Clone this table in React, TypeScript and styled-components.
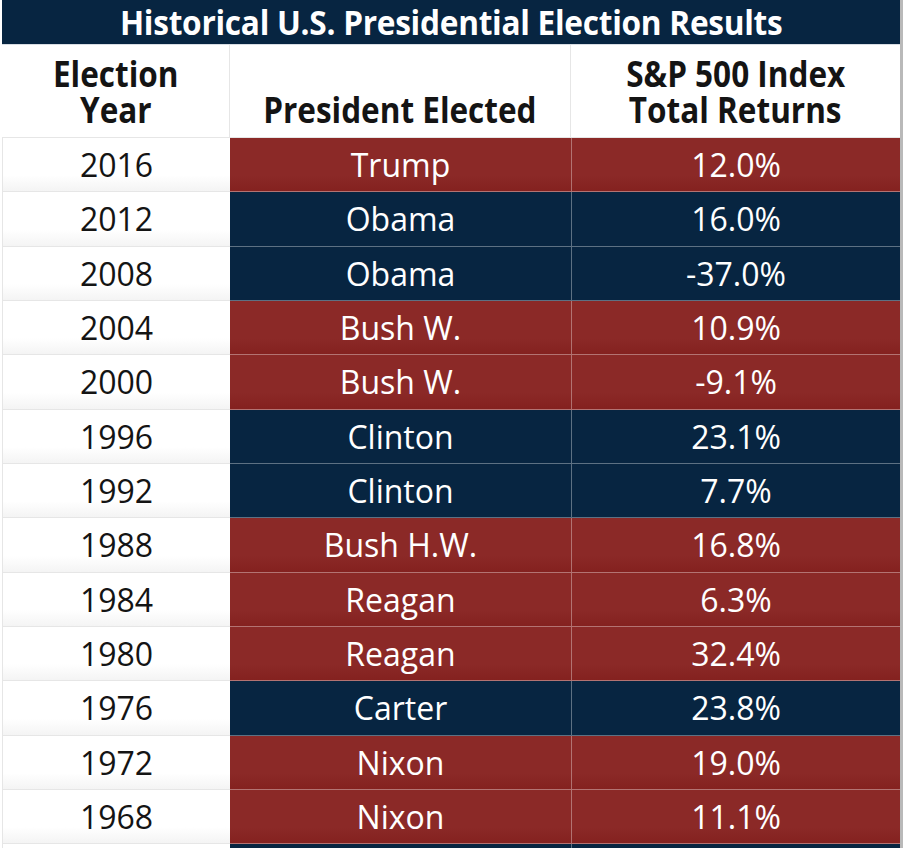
import styled, { createGlobalStyle } from "styled-components";

const GlobalStyle = createGlobalStyle`
  html, body {
    margin: 0;
    padding: 0;
    background: #ffffff;
    overflow: hidden;
  }
`;

const colors = {
  navy: "#072541",
  red: "#8b2927",
  ink: "#141414",
  rule: "#e6e6e6",
};

type Party = "R" | "D";

interface Row {
  year: string;
  president: string;
  party: Party;
  returns: string;
}

const rows: Row[] = [
  { year: "2016", president: "Trump", party: "R", returns: "12.0%" },
  { year: "2012", president: "Obama", party: "D", returns: "16.0%" },
  { year: "2008", president: "Obama", party: "D", returns: "-37.0%" },
  { year: "2004", president: "Bush W.", party: "R", returns: "10.9%" },
  { year: "2000", president: "Bush W.", party: "R", returns: "-9.1%" },
  { year: "1996", president: "Clinton", party: "D", returns: "23.1%" },
  { year: "1992", president: "Clinton", party: "D", returns: "7.7%" },
  { year: "1988", president: "Bush H.W.", party: "R", returns: "16.8%" },
  { year: "1984", president: "Reagan", party: "R", returns: "6.3%" },
  { year: "1980", president: "Reagan", party: "R", returns: "32.4%" },
  { year: "1976", president: "Carter", party: "D", returns: "23.8%" },
  { year: "1972", president: "Nixon", party: "R", returns: "19.0%" },
  { year: "1968", president: "Nixon", party: "R", returns: "11.1%" },
  { year: "1964", president: "Johnson", party: "D", returns: "16.5%" },
];

const Page = styled.div`
  width: 898px;
  margin-left: 2px;
  border-right: 3px solid #b9b9b9;
  font-family: "Open Sans", "Noto Sans", sans-serif;
`;

const TitleBar = styled.div`
  height: 44px;
  background: ${colors.navy};
  color: #ffffff;
  display: flex;
  align-items: center;
  justify-content: center;
  border-bottom: 1px solid #d8dde3;
`;

// Myriad-style bold condensed: squeeze a bold face horizontally
const Condensed = styled.span<{ $squeeze?: number }>`
  display: inline-block;
  font-weight: 700;
  transform: scaleX(${({ $squeeze }) => $squeeze ?? 0.9});
  white-space: nowrap;
`;

const TitleText = styled(Condensed)`
  font-size: 34px;
  line-height: 40px;
  letter-spacing: -0.3px;
`;

const Table = styled.div`
  display: grid;
  grid-template-columns: 228px 341px 1fr;
`;

const HeadCell = styled.div<{ $last?: boolean }>`
  height: 93px;
  box-sizing: border-box;
  border-right: ${({ $last }) => ($last ? "none" : `1px solid ${colors.rule}`)};
  border-bottom: 1px solid ${colors.rule};
  display: flex;
  flex-direction: column;
  align-items: center;
  justify-content: flex-end;
  padding-bottom: 9px;
  color: ${colors.ink};
  line-height: 36px;
`;

const HeadText = styled(Condensed)`
  font-size: 35px;
`;

const Cell = styled.div<{ $party?: Party }>`
  height: 54.33px;
  box-sizing: border-box;
  display: flex;
  align-items: center;
  justify-content: center;
  font-size: 32px;
  color: ${({ $party }) => ($party ? "#ffffff" : colors.ink)};
  background: ${({ $party }) =>
    $party === "R"
      ? `linear-gradient(180deg, ${colors.red} 0%, ${colors.red} 70%, #84211f 100%)`
      : $party === "D"
      ? colors.navy
      : "linear-gradient(180deg, #ffffff 0%, #ffffff 70%, #f4f4f4 100%)"};
  border-bottom: 1px solid
    ${({ $party }) => ($party ? "rgba(255, 255, 255, 0.35)" : colors.rule)};
  border-left: ${({ $party }) => ($party ? "none" : `1px solid ${colors.rule}`)};
`;

const ReturnCell = styled(Cell)`
  border-left: 1px solid rgba(255, 255, 255, 0.35);
`;

export default function App() {
  return (
    <>
      <GlobalStyle />
      <Page>
        <TitleBar>
          <TitleText $squeeze={0.93}>
            Historical U.S. Presidential Election Results
          </TitleText>
        </TitleBar>
        <Table>
          <HeadCell>
            <HeadText $squeeze={0.9}>Election</HeadText>
            <HeadText $squeeze={0.9}>Year</HeadText>
          </HeadCell>
          <HeadCell>
            <HeadText $squeeze={0.9}>President Elected</HeadText>
          </HeadCell>
          <HeadCell $last>
            <HeadText $squeeze={0.9}>S&amp;P 500 Index</HeadText>
            <HeadText $squeeze={0.9}>Total Returns</HeadText>
          </HeadCell>
          {rows.map((r) => (
            <>
              <Cell key={r.year + "y"}>{r.year}</Cell>
              <Cell key={r.year + "p"} $party={r.party}>
                {r.president}
              </Cell>
              <ReturnCell key={r.year + "r"} $party={r.party}>
                {r.returns}
              </ReturnCell>
            </>
          ))}
        </Table>
      </Page>
    </>
  );
}
